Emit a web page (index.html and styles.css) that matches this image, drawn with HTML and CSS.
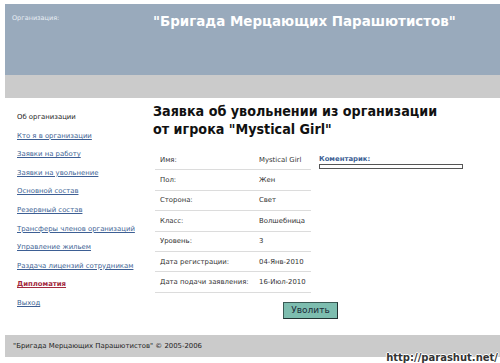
FILE: index.html
```html
<!DOCTYPE html>
<html>
<head>
<meta charset="utf-8">
<link rel="stylesheet" href="styles.css">
</head>
<body>
<div class="page">
  <div class="header">
    <div class="org-label">Организация:</div>
    <div class="org-name">"Бригада Мерцающих Парашютистов"</div>
  </div>
  <div class="subbar"></div>
  <div class="main">
    <ul class="nav">
      <li class="current">Об организации</li>
      <li><a href="#">Кто я в организации</a></li>
      <li><a href="#">Заявки на работу</a></li>
      <li><a href="#">Заявки на увольнение</a></li>
      <li><a href="#">Основной состав</a></li>
      <li><a href="#">Резервный состав</a></li>
      <li><a href="#">Трансферы членов организаций</a></li>
      <li><a href="#">Управление жильем</a></li>
      <li><a href="#">Раздача лицензий сотрудникам</a></li>
      <li><a href="#" class="hot">Дипломатия</a></li>
      <li><a href="#">Выход</a></li>
    </ul>
    <div class="content">
      <h1>Заявка об увольнении из организации<br>от игрока "Mystical Girl"</h1>
      <div class="form-row">
        <table class="info">
          <tr><td>Имя:</td><td>Mystical Girl</td></tr>
          <tr><td>Пол:</td><td>Жен</td></tr>
          <tr><td>Сторона:</td><td>Свет</td></tr>
          <tr><td>Класс:</td><td>Волшебница</td></tr>
          <tr><td>Уровень:</td><td>3</td></tr>
          <tr><td>Дата регистрации:</td><td>04-Янв-2010</td></tr>
          <tr><td>Дата подачи заявления:</td><td>16-Июл-2010</td></tr>
        </table>
        <div class="comment">
          <div class="comment-label">Коментарик:</div>
          <div class="comment-box"></div>
        </div>
      </div>
      <button class="fire">Уволить</button>
    </div>
  </div>
  <div class="footer">"Бригада Мерцающих Парашютистов" © 2005-2006</div>
</div>
<div class="watermark">http://parashut.net/</div>
</body>
</html>
```
FILE: styles.css
```css
html, body {
  margin: 0;
  padding: 0;
  background: #fff;
  font-family: "DejaVu Sans", Verdana, sans-serif;
  overflow: hidden;
}
.page {
  margin: 4px 0 0 5px;
  width: 495px;
}
.header {
  background: #99aabc;
  height: 71px;
  display: flex;
  align-items: flex-start;
}
.org-label {
  color: #e8eef5;
  font-size: 6.5px;
  padding: 10px 0 0 7px;
  width: 141px;
  flex: none;
}
.org-name {
  color: #fff;
  font-family: "DejaVu Sans Condensed", "DejaVu Sans", sans-serif;
  font-weight: bold;
  font-size: 14.95px;
  padding-top: 8px;
  white-space: nowrap;
}
.subbar {
  background: #cbcbcb;
  height: 23px;
}
.main {
  display: flex;
  height: 237px;
}
.nav {
  list-style: none;
  margin: 0;
  padding: 15px 0 0 12px;
  width: 136px;
  font-size: 6.9px;
  flex: none;
}
.nav li {
  height: 18.6px;
  color: #222;
  white-space: nowrap;
}
.nav a {
  color: #3d5f94;
  text-decoration: underline;
}
.nav a.hot {
  color: #a3293d;
  font-weight: bold;
}
.content {
  padding-top: 5px;
}
h1 {
  margin: 0 0 16px 0;
  font-family: "DejaVu Sans Condensed", "DejaVu Sans", sans-serif;
  font-size: 14.2px;
  line-height: 17.5px;
  color: #111;
  white-space: nowrap;
}
.form-row {
  display: flex;
  align-items: flex-start;
}
.info {
  border-collapse: collapse;
  font-size: 6.9px;
  color: #333;
  width: 156px;
  margin-left: 2px;
  white-space: nowrap;
  margin-top: -4px;
}
.info td {
  height: 19.4px;
  padding: 0 0 0 5px;
  border-bottom: 1px solid #dcdcdc;
  vertical-align: middle;
}
.info td:first-child {
  width: 94px;
}
.comment {
  margin-left: 8px;
  width: 144px;
  padding-top: 1px;
}
.comment-label {
  color: #3d5f94;
  font-weight: bold;
  font-size: 6.9px;
  line-height: 8px;
}
.comment-box {
  height: 3px;
  margin-top: 1px;
  border: 1px solid #555;
  background: #fff;
}
.fire {
  margin: 9px 0 0 130px;
  background: #7dbdaf;
  border: 1px solid #3a5a55;
  border-right-color: #233;
  border-bottom-color: #233;
  font-family: "DejaVu Sans", Verdana, sans-serif;
  font-size: 9px;
  color: #1c2b3a;
  padding: 2px 6px;
  height: 17px;
  width: 55px;
}
.footer {
  background: #cbcbcb;
  height: 22px;
  line-height: 23px;
  font-size: 6.9px;
  color: #222;
  padding-left: 8px;
}
.watermark {
  position: absolute;
  right: 2px;
  bottom: 0;
  font-family: "DejaVu Sans", sans-serif;
  font-weight: bold;
  font-size: 10px;
  color: #333;
  text-shadow: 1px 0 0 #fff, -1px 0 0 #fff, 0 1px 0 #fff, 0 -1px 0 #fff;
}
```
